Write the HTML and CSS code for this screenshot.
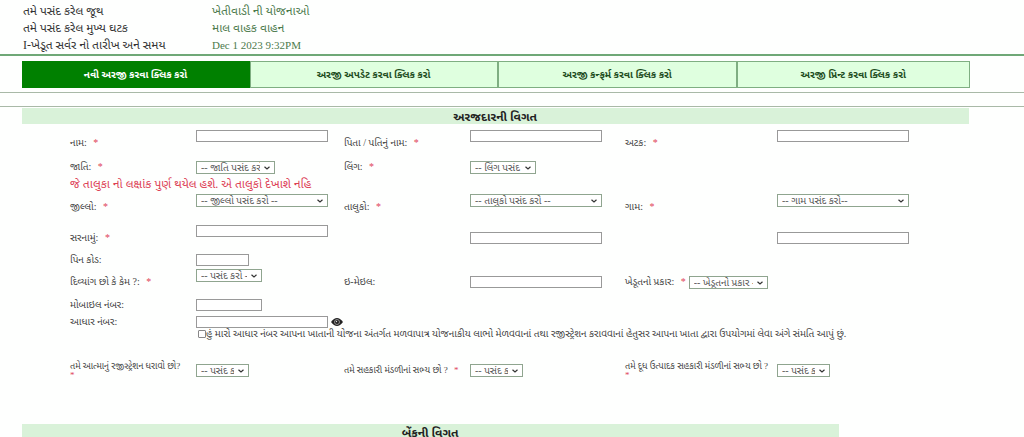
FILE: index.html
```
<!DOCTYPE html>
<html lang="gu">
<head>
<meta charset="utf-8">
<meta name="viewport" content="width=device-width, initial-scale=1">
<title>અરજદારની વિગત</title>
<link rel="stylesheet" href="styles.css">
</head>
<body>
<header>
  <dl class="summary">
    <dt>તમે પસંદ કરેલ જૂથ</dt><dd>ખેતીવાડી ની યોજનાઓ</dd>
    <dt>તમે પસંદ કરેલ મુખ્ય ઘટક</dt><dd>માલ વાહક વાહન</dd>
    <dt>I-ખેડૂત સર્વર નો તારીખ અને સમય</dt><dd class="date">Dec 1 2023 9:32PM</dd>
  </dl>
  <nav class="tabs">
    <a class="tab tab-active" href="#new">નવી અરજી કરવા ક્લિક કરો</a>
    <a class="tab" href="#update">અરજી અપડેટ કરવા ક્લિક કરો</a>
    <a class="tab" href="#confirm">અરજી કન્ફર્મ કરવા ક્લિક કરો</a>
    <a class="tab" href="#print">અરજી પ્રિન્ટ કરવા ક્લિક કરો</a>
  </nav>
  <div class="strip"></div>
</header>
<main>
  <h2 class="section-title">અરજદારની વિગત</h2>
  <form class="form">
    <div class="row row-name">
      <label class="low" for="name">નામ: <span class="req">*</span></label>
      <input class="text" id="name" type="text">
      <label class="low" for="father">પિતા / પતિનું નામ: <span class="req">*</span></label>
      <input class="text" id="father" type="text">
      <label class="low" for="surname">અટક: <span class="req">*</span></label>
      <input class="text" id="surname" type="text">
    </div>
    <div class="row row-caste">
      <label for="caste">જાતિ: <span class="req">*</span></label>
      <select class="w-caste" id="caste"><option>-- જાતિ પસંદ કરો --</option></select>
      <label for="gender">લિંગ: <span class="req">*</span></label>
      <select class="w-small" id="gender"><option>-- લિંગ પસંદ કરો --</option></select>
    </div>
    <p class="warning">જે તાલુકા નો લક્ષાંક પુર્ણ થયેલ હશે. એ તાલુકો દેખાશે નહિ</p>
    <div class="row row-place">
      <label class="low" for="district">જીલ્લો: <span class="req">*</span></label>
      <select id="district"><option>-- જીલ્લો પસંદ કરો --</option></select>
      <label class="low" for="taluka">તાલુકો: <span class="req">*</span></label>
      <select id="taluka"><option>-- તાલુકો પસંદ કરો --</option></select>
      <label class="low" for="village">ગામ: <span class="req">*</span></label>
      <select id="village"><option>-- ગામ પસંદ કરો--</option></select>
    </div>
    <div class="row row-address">
      <label class="low" for="address1">સરનામું: <span class="req">*</span></label>
      <input class="text" id="address1" type="text">
      <input class="text field-2 lower" type="text" aria-label="સરનામું 2">
      <input class="text field-3 lower" type="text" aria-label="સરનામું 3">
    </div>
    <div class="row row-pin">
      <label for="pin">પિન કોડ:</label>
      <input class="text w-tiny" id="pin" type="text">
    </div>
    <div class="row row-email">
      <label class="low" for="disabled">દિવ્યાંગ છો કે કેમ ?: <span class="req">*</span></label>
      <select class="w-small" id="disabled"><option>-- પસંદ કરો --</option></select>
      <label class="low" for="email">ઇ-મેઇલ:</label>
      <input class="text lower" id="email" type="text">
      <div class="pair lower">
        <label for="type">ખેડૂતનો પ્રકાર: <span class="req">*</span></label>
        <select class="w-caste" id="type"><option>-- ખેડૂતનો પ્રકાર --</option></select>
      </div>
    </div>
    <div class="row row-mobile">
      <label for="mobile">મોબાઇલ નંબર:</label>
      <input class="text w-small" id="mobile" type="text">
    </div>
    <div class="row row-aadhaar">
      <label for="aadhaar">આધાર નંબર:</label>
      <div class="reveal">
        <input class="text" id="aadhaar" type="text">
        <button class="eye" type="button" aria-label="આધાર નંબર બતાવો"><svg viewBox="0 0 12 8" width="12" height="8"><path d="M0 4Q3 0 6 0T12 4Q9 8 6 8T0 4Z" fill="#222"/><circle cx="6" cy="4" r="2.5" fill="none" stroke="#bbb" stroke-width=".7"/><circle cx="5.5" cy="3.5" r=".7" fill="#ddd"/></svg></button>
      </div>
    </div>
    <div class="row row-consent">
      <div class="consent"><input class="check" id="consent" type="checkbox"><label for="consent">હું મારો આધાર નંબર આપના ખાતાની યોજના અંતર્ગત મળવાપાત્ર યોજનાકીય લાભો મેળવવાનાં તથા રજીસ્ટ્રેશન કરાવવાનાં હેતુસર આપના ખાતા દ્વારા ઉપયોગમાં લેવા અંગે સંમતિ આપું છું.</label></div>
    </div>
    <div class="row row-member">
      <label for="atma">તમે આત્માનું રજીસ્ટ્રેશન ધરાવો છો? <span class="req req-below">*</span></label>
      <select class="w-tiny drop" id="atma"><option>-- પસંદ કરો --</option></select>
      <label class="drop" for="coop">તમે સહકારી મંડળીનાં સભ્ય છો ? <span class="req">*</span></label>
      <select class="w-tiny drop" id="coop"><option>-- પસંદ કરો --</option></select>
      <label for="dairy">તમે દૂધ ઉત્પાદક સહકારી મંડળીનાં સભ્ય છો ? <span class="req req-below">*</span></label>
      <select class="w-tiny drop" id="dairy"><option>-- પસંદ કરો --</option></select>
    </div>
  </form>
  <h2 class="section-title section-bank">બેંકની વિગત</h2>
</main>
</body>
</html>
```
FILE: styles.css
```
* { box-sizing: border-box; }
html { scrollbar-width: none; }
body {
  margin: 0;
  background: #fefffe;
  color: #444;
  font-family: "Liberation Serif", "Noto Sans Gujarati", serif;
  font-size: 10px;
  line-height: 12px;
}
.summary {
  display: grid;
  grid-template-columns: 189fr 812fr;
  margin: 0;
  padding: 3px 0 0 23px;
  border-bottom: 2px solid #6fa877;
  font-size: 12px;
  line-height: 17px;
}
.summary dt { color: #333; }
.summary dd { margin: 0; color: #4c7a4c; }
.summary .date { font-size: 11px; }
.tabs {
  display: grid;
  grid-template-columns: 228fr 248fr 239fr 233fr;
  margin: 5px 5.3% 4px 2.1%;
}
.tab {
  padding: 6px 4px;
  border: 1px solid #7fae82;
  background: #dfffdf;
  color: #1e4d1e;
  font-size: 10px;
  font-weight: bold;
  line-height: 13px;
  text-align: center;
  text-decoration: none;
}
.tab-active { border-color: #008000; background: #008000; color: #fff; }
.strip { height: 15px; border: solid #a9b9a7; border-width: 1px 0; }
.section-title {
  margin: 1px 5.4% 0 2.1%;
  padding-top: 3px;
  background: #d9f2d9;
  color: #222;
  font-size: 12px;
  font-weight: bold;
  line-height: 13px;
  text-align: center;
}
.section-bank { margin-right: 18.1%; }
.form { padding: 6px 0 0 70px; }
.row {
  display: grid;
  grid-template-columns: 126fr 148fr 126fr 155fr 152fr 247fr;
  align-items: start;
}
.row > * { min-width: 0; }
.row-name { min-height: 31px; }
.row-caste { min-height: 17px; }
.row-place { min-height: 31px; }
.row-address { min-height: 29px; }
.row-pin { min-height: 15px; }
.row-email { min-height: 30px; }
.row-mobile { min-height: 17px; }
.row-aadhaar { min-height: 12px; }
.row-consent { min-height: 32px; }
.row-member { min-height: 63px; font-size: 9px; }
.row label { white-space: nowrap; }
.low { padding-top: 7px; }
.lower { margin-top: 7px; }
.drop { margin-top: 4px; }
.field-2 { grid-column: 4; }
.field-3 { grid-column: 6; }
.req { margin-left: 4px; color: #e0455a; }
.req-below { display: block; margin-left: 0; line-height: 6px; }
.warning { margin: 0 0 4px; color: #dc4055; font-size: 12px; line-height: 12px; }
.text, select {
  width: 132px;
  border: 1px solid #999;
  border-radius: 0;
  background-color: #fff;
  color: #555;
  font: 10px/11px "Liberation Serif", "Noto Sans Gujarati", serif;
}
.text { height: 12px; padding: 0 2px; }
select {
  height: 13px;
  padding: 0 14px 0 4px;
  border-color: #8fa58f;
  appearance: none;
  background-image: url("data:image/svg+xml,%3Csvg xmlns='http://www.w3.org/2000/svg' viewBox='0 0 6 4'%3E%3Cpath d='M.5.8 3 3 5.5.8' fill='none' stroke='%23333' stroke-width='1.2'/%3E%3C/svg%3E");
  background-position: right 4px center;
  background-repeat: no-repeat;
  background-size: 6px 4px;
}
.w-caste { width: 79px; }
.w-small { width: 66px; }
.w-tiny { width: 53px; }
.pair { display: flex; grid-column: 5 / 7; gap: 3px; }
.reveal { display: flex; align-items: center; gap: 3px; }
.reveal .text { flex: none; }
.eye { flex: none; display: flex; padding: 0; border: 0; background: none; }
.consent { display: flex; grid-column: 2 / 7; align-items: center; padding-left: 2px; }
.check { appearance: none; flex: none; width: 8px; height: 8px; margin: 0; border: 1px solid #888; border-radius: 1px; background: #fff; }
.check:checked { background: #008000; }
```
